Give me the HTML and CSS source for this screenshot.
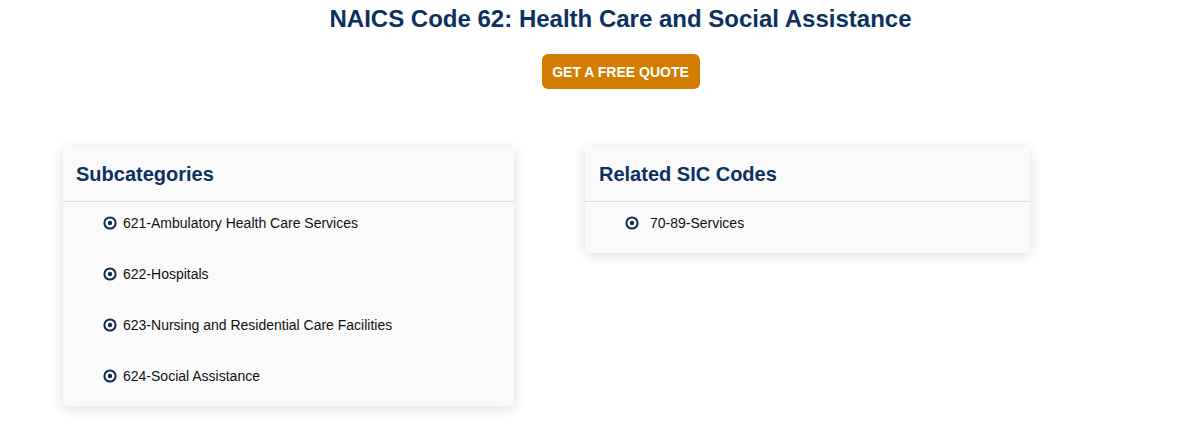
FILE: index.html
```html
<!DOCTYPE html>
<html>
<head>
<meta charset="utf-8">
<link rel="stylesheet" href="styles.css">
</head>
<body>
<div class="page">
  <h1 class="title">NAICS Code 62: Health Care and Social Assistance</h1>
  <div class="cta-wrap"><a class="cta" href="#">GET A FREE QUOTE</a></div>
  <div class="cards">
    <div class="card card-left">
      <h2 class="card-head">Subcategories</h2>
      <ul class="list">
        <li><svg class="ico" viewBox="0 0 14 14"><circle cx="7" cy="7" r="5.6" fill="none" stroke="#0d2c4e" stroke-width="2"/><circle cx="7" cy="7" r="2.2" fill="#0d2c4e"/></svg><span>621-Ambulatory Health Care Services</span></li>
        <li><svg class="ico" viewBox="0 0 14 14"><circle cx="7" cy="7" r="5.6" fill="none" stroke="#0d2c4e" stroke-width="2"/><circle cx="7" cy="7" r="2.2" fill="#0d2c4e"/></svg><span>622-Hospitals</span></li>
        <li><svg class="ico" viewBox="0 0 14 14"><circle cx="7" cy="7" r="5.6" fill="none" stroke="#0d2c4e" stroke-width="2"/><circle cx="7" cy="7" r="2.2" fill="#0d2c4e"/></svg><span>623-Nursing and Residential Care Facilities</span></li>
        <li><svg class="ico" viewBox="0 0 14 14"><circle cx="7" cy="7" r="5.6" fill="none" stroke="#0d2c4e" stroke-width="2"/><circle cx="7" cy="7" r="2.2" fill="#0d2c4e"/></svg><span>624-Social Assistance</span></li>
      </ul>
    </div>
    <div class="card card-right">
      <h2 class="card-head">Related SIC Codes</h2>
      <ul class="list list-wide">
        <li><svg class="ico" viewBox="0 0 14 14"><circle cx="7" cy="7" r="5.6" fill="none" stroke="#0d2c4e" stroke-width="2"/><circle cx="7" cy="7" r="2.2" fill="#0d2c4e"/></svg><span>70-89-Services</span></li>
      </ul>
    </div>
  </div>
</div>
</body>
</html>
```

FILE: styles.css
```css
html, body {
  margin: 0;
  padding: 0;
  background: #ffffff;
}
body {
  font-family: "Liberation Sans", Arial, sans-serif;
  color: #111;
}
.page {
  width: 1182px;
  padding-bottom: 30px;
}
.title {
  margin: 0;
  padding-top: 5px;
  font-size: 24px;
  line-height: 28px;
  font-weight: bold;
  color: #0b3161;
  text-align: center;
  padding-left: 59px;
  box-sizing: border-box;
}
.cta-wrap {
  display: flex;
  justify-content: center;
  padding-left: 59px;
  margin-top: 21px;
}
.cta {
  display: block;
  width: 158px;
  height: 35px;
  line-height: 36px;
  text-align: center;
  background: #d27c00;
  color: #fff;
  font-weight: bold;
  font-size: 14px;
  text-decoration: none;
  border-radius: 6px;
}
.cards {
  display: flex;
  align-items: flex-start;
  gap: 71px;
  padding-left: 63px;
  margin-top: 58px;
}
.card {
  background: #fbfafa;
  box-shadow: 0 2px 12px rgba(140, 90, 90, 0.22);
}
.card-left { width: 451px; }
.card-right { width: 445px; }
.card-head {
  margin: 0;
  padding: 15px 13px 0;
  height: 39px;
  font-size: 20px;
  line-height: 24px;
  font-weight: bold;
  color: #0b3161;
  border-bottom: 1px solid #dcdcdc;
}
.card-right .card-head { padding-left: 14px; }
.list {
  list-style: none;
  margin: 0;
  padding: 11px 0 0 40px;
}
.list li {
  display: flex;
  align-items: center;
  height: 20px;
  padding-bottom: 31px;
  font-size: 14px;
  color: #111;
}
.list li:last-child {
  padding-bottom: 20px;
}
.ico {
  width: 14px;
  height: 14px;
  margin-right: 6px;
  flex: none;
}
.list-wide .ico {
  margin-right: 11px;
}
```
